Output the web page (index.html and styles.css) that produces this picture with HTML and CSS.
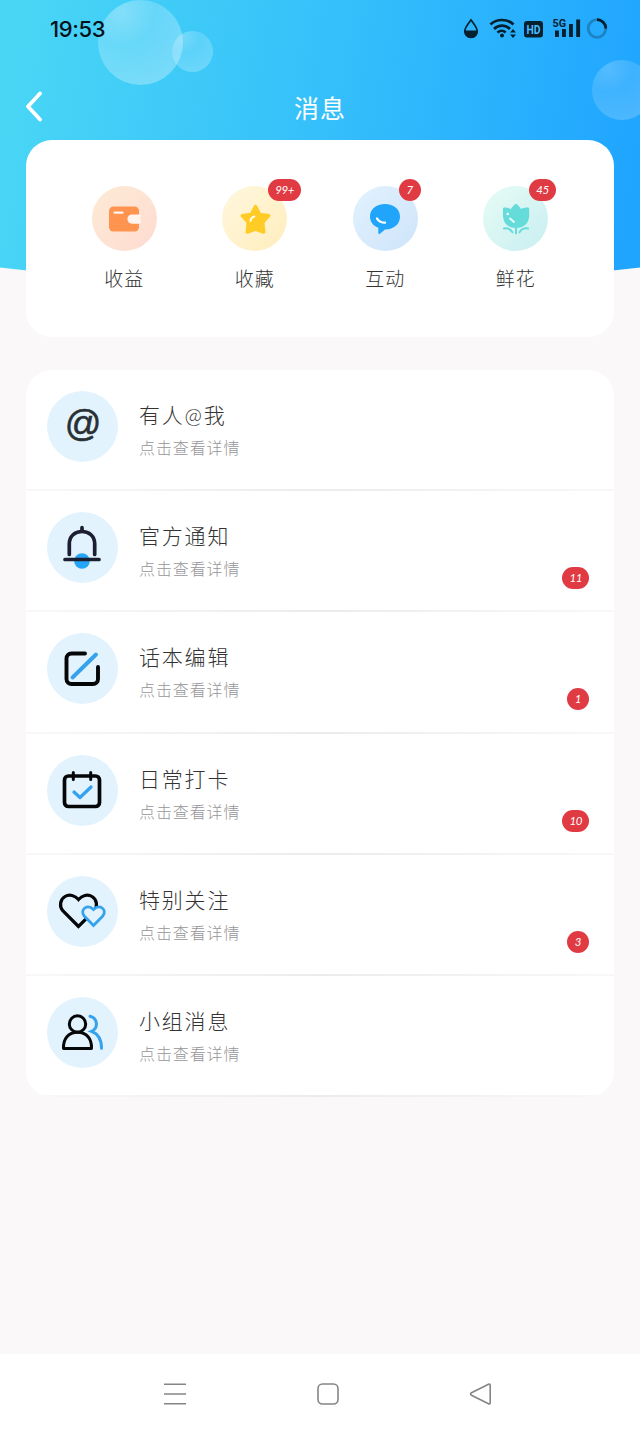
FILE: index.html
```html
<!DOCTYPE html>
<html lang="zh-CN">
<head>
  <meta charset="UTF-8">
  <meta name="viewport" content="width=device-width, initial-scale=1.0">
  <title>消息</title>
  <link rel="stylesheet" href="styles.css">
</head>
<body>
  <header class="header">
    <span class="bubble bubble-large"></span>
    <span class="bubble bubble-small"></span>
    <span class="bubble bubble-right"></span>
    <div class="status-bar">
      <span class="time">19:53</span>
      <svg class="status-icons" width="146" height="26" viewBox="0 0 146 26">
        <path d="M9 5C6.500 8.500 2.800 12.500 2.800 16.200a6.200 6.200 0 0 0 12.400 0C15.200 12.500 11.500 8.500 9 5z" fill="none" stroke="#05202f" stroke-width="1.700"/>
        <path d="M2.500 15.500h13a6.500 6.500 0 0 1-13 2z" fill="#05202f"/>
        <g fill="none" stroke="#05202f" stroke-width="2.700">
          <path d="M28.500 9.500c6-6 17-6 23 0M32 14c4.500-4.500 12-4.500 16 0M35.500 17.600c2.500-2.500 6-2.500 8 0"/>
        </g>
        <circle cx="40" cy="20.500" r="2" fill="#05202f"/>
        <path d="M48 17.500h6l-3-3.500zM48 19.500h6l-3 3.500z" fill="#05202f"/>
        <rect x="62" y="6" width="19" height="16.500" rx="3" fill="#05202f"/>
        <text class="hd-text" x="71.500" y="18.800" text-anchor="middle" textLength="14" lengthAdjust="spacingAndGlyphs">HD</text>
        <text class="net-text" x="90.500" y="12" textLength="13.500" lengthAdjust="spacingAndGlyphs">5G</text>
        <path d="M93 15.500h3.900V22H93zM100 14h3.900v8H100zM107 9h3.900v13H107zM114.200 4.500h3.900V22h-3.900z" fill="#05202f"/>
        <circle cx="135" cy="13.500" r="8.800" fill="none" stroke="#05202f" stroke-opacity=".28" stroke-width="2.800"/>
        <path d="M135 4.700a8.800 8.800 0 0 1 8.800 8.800" fill="none" stroke="#05202f" stroke-width="2.800"/>
      </svg>
    </div>
    <div class="title-bar">
      <svg class="back" width="18" height="32" viewBox="0 0 18 32">
        <path d="M15 2.500L3 15.500l12 13" fill="none" stroke="#fff" stroke-width="3.800" stroke-linecap="round" stroke-linejoin="round"/>
      </svg>
      <h1>消息</h1>
    </div>
  </header>

  <main>
    <section class="card shortcuts">
      <a class="shortcut">
        <span class="circle orange">
          <svg width="36" height="36" viewBox="0 0 36 36">
            <rect x="3" y="5.500" width="30" height="25" rx="4.500" fill="#ff9350"/>
            <path d="M34.500 13.500H26a4.600 4.600 0 0 0 0 9.200h8.500z" fill="#fff5ee"/>
            <path d="M8.500 11.700h8" stroke="#fff5ee" stroke-width="2.200" stroke-linecap="round"/>
          </svg>
        </span>
        <span class="label">收益</span>
      </a>
      <a class="shortcut">
        <span class="circle yellow">
          <svg width="36" height="36" viewBox="0 0 36 36">
            <path d="M18.500 5.500l4.200 8 9 1.200-6 6.700 1 9.600-8.200-3-8.200 3 1-9.600-6-6.700 9-1.200z" fill="#ffcb25" stroke="#ffcb25" stroke-width="3.500" stroke-linejoin="round"/>
            <path d="M13.500 20c.2-2.300 1.500-3.800 3.900-4.500" fill="none" stroke="#fffbe8" stroke-width="2" stroke-linecap="round"/>
          </svg>
          <i class="badge">99+</i>
        </span>
        <span class="label">收藏</span>
      </a>
      <a class="shortcut">
        <span class="circle blue">
          <svg width="36" height="36" viewBox="0 0 36 36">
            <path d="M18 3C9.500 3 3 8 3 15.500c0 5.500 3.500 9.500 8.300 11.300V32c0 1 .9 1.300 1.700.7l5-4.200c9 0 15-5.500 15-13S26.500 3 18 3z" fill="#20a5fb"/>
            <path d="M10 17.500c1.500 2.700 4.500 4.200 8 4.200" fill="none" stroke="#fff" stroke-width="2.300" stroke-linecap="round"/>
          </svg>
          <i class="badge">7</i>
        </span>
        <span class="label">互动</span>
      </a>
      <a class="shortcut">
        <span class="circle green">
          <svg width="36" height="36" viewBox="0 0 36 36">
            <path d="M18 2.800c.8 0 3.800 3.200 5 5.100 2-.9 5-1.500 7.200-1.300.8.100 1 .8 1 2V14c0 8-5 13-13.200 13S5 22 5 14V8.600c0-1.200.2-1.900 1-2 2.200-.2 5 .4 7 1.300 1.200-1.900 4.200-5.100 5-5.100z" fill="#65dcda"/>
            <path d="M18 26v6.500M6 27.500c4.500-.8 6.500.5 8.500 3.700M30 27.500c-4.500-.8-6.500.5-8.500 3.700" fill="none" stroke="#65dcda" stroke-width="2" stroke-linecap="round"/>
            <circle cx="9.700" cy="13" r="1.300" fill="#effffd"/>
            <path d="M12 17.500l4 3.500" stroke="#effffd" stroke-width="1.800" stroke-linecap="round"/>
          </svg>
          <i class="badge">45</i>
        </span>
        <span class="label">鲜花</span>
      </a>
    </section>

    <ul class="card messages">
      <li>
        <span class="icon at">@</span>
        <div class="text">
          <h2>有人@我</h2>
          <p>点击查看详情</p>
        </div>
      </li>
      <li>
        <span class="icon">
          <svg width="46" height="46" viewBox="1 0 46 46">
            <circle cx="23" cy="36" r="7.800" fill="#24a5f7"/>
            <path d="M10.300 29.500V19C10.300 11 16 6.500 23 6.500S35.700 11 35.700 19v10.500M23 6V2.700M6 34.500h34" fill="none" stroke="#1c1e31" stroke-width="3.700" stroke-linecap="round"/>
          </svg>
        </span>
        <div class="text">
          <h2>官方通知</h2>
          <p>点击查看详情</p>
        </div>
        <i class="badge">11</i>
      </li>
      <li>
        <span class="icon">
          <svg width="46" height="46" viewBox="1 0 46 46" fill="none" stroke-linecap="round">
            <path d="M26 7.500H12.500a5 5 0 0 0-5 5V33a5 5 0 0 0 5 5H34a5 5 0 0 0 5-5V21" stroke="#050608" stroke-width="3.900"/>
            <path d="M13.500 31.500L37 8.500" stroke="#35a2ed" stroke-width="3.900"/>
          </svg>
        </span>
        <div class="text">
          <h2>话本编辑</h2>
          <p>点击查看详情</p>
        </div>
        <i class="badge">1</i>
      </li>
      <li>
        <span class="icon">
          <svg width="46" height="46" viewBox="1 0 46 46" fill="none" stroke-linecap="round" stroke-linejoin="round">
            <rect x="5.500" y="9" width="35" height="30.500" rx="4" stroke="#050608" stroke-width="3.700"/>
            <path d="M14.300 5.500v7M31.700 5.500v7" stroke="#050608" stroke-width="3"/>
            <path d="M15 25l6 5.500L32 20" stroke="#35a2ed" stroke-width="3.300"/>
          </svg>
        </span>
        <div class="text">
          <h2>日常打卡</h2>
          <p>点击查看详情</p>
        </div>
        <i class="badge">10</i>
      </li>
      <li>
        <span class="icon">
          <svg width="50" height="46" viewBox="1 0 50 46">
            <path d="M21.500 38.500L6 23C2 18.500 3 11.500 8 8.500c4.500-2.800 10-1 13.500 3 3.500-4 9-5.800 13.500-3 5 3 6 10 2 14.500z" fill="none" stroke="#050608" stroke-width="3.200"/>
            <path d="M36.500 37.500l-9.300-9.500c-2.500-3-1.700-6.500.8-8.100 3-1.900 6-.8 8.500 1.700 2.500-2.500 5.500-3.600 8.500-1.700 2.500 1.600 3.300 5.100.8 8.100z" fill="#e2f3fe" stroke="#35a2ed" stroke-width="2.800"/>
          </svg>
        </span>
        <div class="text">
          <h2>特别关注</h2>
          <p>点击查看详情</p>
        </div>
        <i class="badge">3</i>
      </li>
      <li>
        <span class="icon">
          <svg width="46" height="46" viewBox="1 0 46 46" fill="none" stroke-linecap="round">
            <g stroke="#050608" stroke-width="3">
              <circle cx="18.500" cy="15" r="8.200"/>
              <path d="M4.500 39.500c-.5-10 5-16.200 14-16.200s14.500 6.200 14 16.200z" stroke-linejoin="round"/>
            </g>
            <path d="M31 7.300c8 2 8.500 12 1.500 15 7 2.500 10 9 10 17" stroke="#35a2ed" stroke-width="3"/>
          </svg>
        </span>
        <div class="text">
          <h2>小组消息</h2>
          <p>点击查看详情</p>
        </div>
      </li>
    </ul>
  </main>

  <nav class="nav-bar">
    <svg width="24" height="24" viewBox="0 0 24 24"><path d="M1 2.200h22M1 12h22M1 21.800h22"/></svg>
    <svg width="24" height="24" viewBox="0 0 24 24"><rect x="2" y="2" width="20" height="20" rx="4.500"/></svg>
    <svg width="24" height="24" viewBox="0 0 24 24"><path d="M20.500 2.300L3.500 10.800c-1.200.7-1.200 1.700 0 2.400l17 8.500c1 .5 1.700 0 1.700-1V3.300c0-1-.7-1.500-1.700-1z"/></svg>
  </nav>
</body>
</html>
```
FILE: styles.css
```css
* { box-sizing: border-box; }
body {
  margin: 0;
  height: 1433px;
  display: flex;
  flex-direction: column;
  background: #faf8f9;
  font-family: Lato, "Noto Sans CJK SC", sans-serif;
  color: #333;
}
h1, h2, p, ul { margin: 0; padding: 0; font-weight: 300; }

/* ヘッダー */
.header {
  position: relative;
  flex: none;
  height: 286px;
  margin-bottom: -146px;
  background: linear-gradient(100deg, #49d6f5 3%, #37c2fa 45%, #20a5ff 96%);
  clip-path: circle(2780px at 50% calc(100% - 2780px));
}
.bubble {
  position: absolute;
  border-radius: 50%;
  background: radial-gradient(circle at 28% 15%, rgba(255,255,255,0.34), rgba(255,255,255,0.2) 35%, rgba(255,255,255,0.34));
}
.bubble-large { left: 98px; top: 0; width: 85px; height: 85px; }
.bubble-small { left: 172px; top: 31px; width: 41px; height: 41px; opacity: 0.8; }
.bubble-right { left: 592px; top: 60px; width: 60px; height: 60px; opacity: 0.65; }
.status-bar {
  position: relative;
  display: flex;
  justify-content: space-between;
  height: 58px;
  padding: 15px 32px 0 50px;
}
.time {
  font: 500 22px/28px Inter, sans-serif;
  letter-spacing: -0.4px;
  color: #061019;
}
.hd-text { font: bold 12px Roboto, sans-serif; fill: #4bbcff; }
.net-text { font: bold 11px Roboto, sans-serif; fill: #05202f; }
.title-bar {
  display: grid;
  grid-template-columns: 60px 1fr 60px;
  align-items: center;
  height: 98px;
}
.back { margin-left: 25px; }
.title-bar h1 {
  font-size: 25px;
  font-weight: 400;
  text-align: center;
  letter-spacing: 1px;
  color: #fff;
}

/* カード */
main { position: relative; flex: 1; padding: 0 26px; }
.card {
  background: #fff;
  border-radius: 26px;
}
.shortcuts {
  display: grid;
  grid-template-columns: repeat(4, 130.5px);
  justify-content: center;
  height: 197px;
  padding-top: 46px;
}
.shortcut {
  display: flex;
  flex-direction: column;
  align-items: center;
}
.circle {
  position: relative;
  display: grid;
  place-items: center;
  width: 65px;
  height: 65px;
  border-radius: 50%;
}
.orange { background: linear-gradient(135deg, #fdebd5, #fedbd1); }
.yellow { background: linear-gradient(135deg, #fff7de, #ffedbd); }
.blue { background: linear-gradient(135deg, #e1f2fd, #cfe4fb); }
.green { background: linear-gradient(135deg, #e7fcf5, #c8eef1); }
.label {
  margin-top: 14px;
  font-size: 19px;
  font-weight: 300;
  line-height: 28px;
  letter-spacing: 1px;
}
.badge {
  min-width: 22px;
  height: 22px;
  padding: 0 7px;
  border-radius: 11px;
  background: #e03a43;
  color: #fff;
  font-size: 11.5px;
  font-style: italic;
  font-weight: 400;
  line-height: 22px;
  letter-spacing: -0.4px;
  text-align: center;
}
.circle .badge { position: absolute; left: 46px; top: -7px; }

/* メッセージ一覧 */
.messages {
  margin-top: 33px;
  list-style: none;
  overflow: hidden;
}
.messages li {
  display: flex;
  height: 121.2px;
  padding: 21px 25px 0 21px;
  background: linear-gradient(90deg, #f8f8f9, #ececef 50%, #f8f8f9) bottom / 100% 2px no-repeat;
}
.icon {
  display: grid;
  place-items: center;
  flex: none;
  width: 71px;
  height: 71px;
  border-radius: 50%;
  background: #e2f3fe;
}
.at {
  padding-bottom: 5px;
  font-family: "Liberation Sans", sans-serif;
  font-size: 36px;
  font-style: italic;
  line-height: 40px;
  color: #293033;
  -webkit-text-stroke: 0.6px #293033;
}
.text { flex: 1; padding: 8px 0 0 21px; }
.text h2 {
  font-size: 21px;
  line-height: 32px;
  letter-spacing: 1.8px;
}
.text p {
  margin-top: 4px;
  font-size: 16px;
  line-height: 26px;
  letter-spacing: 0.9px;
  color: #969699;
}
.messages .badge { margin-top: 55px; }

/* ナビゲーションバー */
.nav-bar {
  display: flex;
  justify-content: space-between;
  flex: none;
  height: 79px;
  padding: 28px 148px 0 163px;
  background: #fff;
}
.nav-bar svg {
  fill: none;
  stroke: #858585;
  stroke-width: 1.6;
}
```
